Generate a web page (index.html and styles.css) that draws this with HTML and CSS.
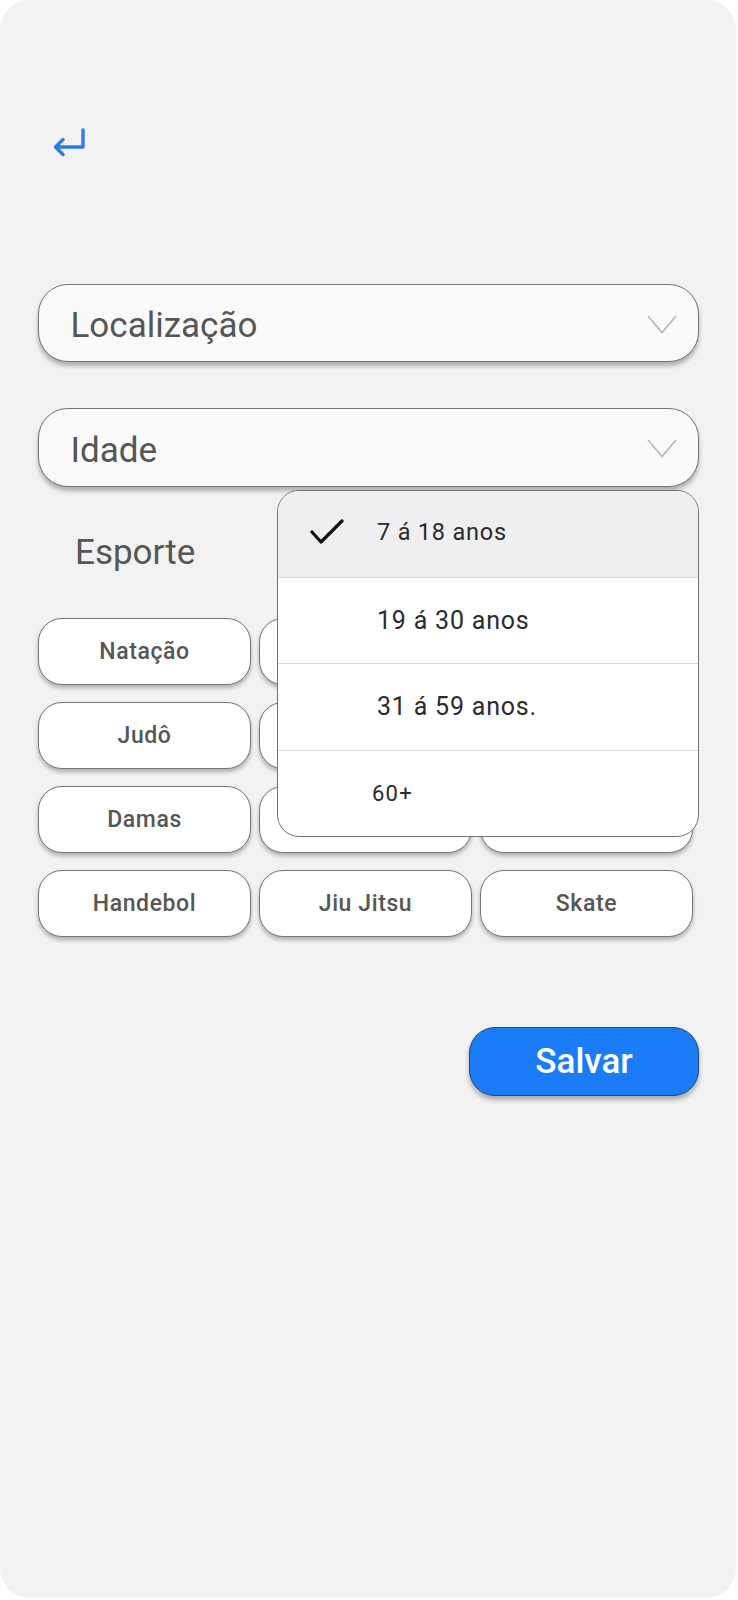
FILE: index.html
```html
<!DOCTYPE html>
<html lang="pt-BR">
<head>
<meta charset="utf-8">
<title>Filtros</title>
<link rel="stylesheet" href="styles.css">
</head>
<body>
<div class="screen">
  <a class="back" aria-label="Voltar">
    <svg width="36" height="30" viewBox="0 0 36 30" fill="none" stroke="#2a7de3" stroke-width="3.4" stroke-linecap="round" stroke-linejoin="round">
      <path d="M31 2 V19 H4"/>
      <path d="M11 11.5 L3.5 19 L11 26.5"/>
    </svg>
  </a>

  <div class="select select-first">
    <span class="select-label">Localização</span>
    <svg class="chevron" width="30" height="19" viewBox="0 0 30 19" fill="none" stroke="#b4b4b4" stroke-width="1.6">
      <polyline points="1,1 15,17.5 29,1"/>
    </svg>
  </div>

  <div class="select-wrap">
    <div class="select">
      <span class="select-label">Idade</span>
      <svg class="chevron" width="30" height="19" viewBox="0 0 30 19" fill="none" stroke="#b4b4b4" stroke-width="1.6">
        <polyline points="1,1 15,17.5 29,1"/>
      </svg>
    </div>
    <ul class="menu">
      <li class="menu-item selected">
        <svg class="check" width="34" height="27" viewBox="0 0 34 27" fill="none" stroke="#111" stroke-width="3.2" stroke-linecap="round" stroke-linejoin="round">
          <polyline points="2,14 11,24 32,3"/>
        </svg>
        <span class="t-sm">7 á 18 anos</span>
      </li>
      <li class="menu-item"><span class="t-lg">19 á 30 anos</span></li>
      <li class="menu-item"><span class="t-lg">31 á 59 anos.</span></li>
      <li class="menu-item last"><span class="t-xs">60+</span></li>
    </ul>
  </div>

  <div class="section-label">Esporte</div>

  <div class="sports">
    <button class="chip">Natação</button>
    <button class="chip">Futebol</button>
    <button class="chip">Vôlei</button>
    <button class="chip">Judô</button>
    <button class="chip">Basquete</button>
    <button class="chip">Tênis</button>
    <button class="chip">Damas</button>
    <button class="chip">Xadrez</button>
    <button class="chip">Atletismo</button>
    <button class="chip">Handebol</button>
    <button class="chip">Jiu Jitsu</button>
    <button class="chip">Skate</button>
  </div>

  <div class="actions">
    <button class="save">Salvar</button>
  </div>
</div>
</body>
</html>
```

FILE: styles.css
```css
* {
  box-sizing: border-box;
}

html, body {
  margin: 0;
  padding: 0;
  background: #ffffff;
}

body {
  font-family: Roboto, "Liberation Sans", Arial, sans-serif;
}

.screen {
  position: relative;
  width: 736px;
  height: 1598px;
  background: #f2f2f2;
  border-radius: 30px;
  padding: 128px 37px 0 38px;
  display: flex;
  flex-direction: column;
}

.back {
  display: block;
  width: 36px;
  height: 30px;
  margin-left: 14px;
}

.back svg {
  display: block;
}

.select {
  height: 78px;
  background: #fafafa;
  border: 1.5px solid #747474;
  border-radius: 30px;
  box-shadow: 0 4px 4px rgba(0, 0, 0, 0.28);
  display: flex;
  align-items: center;
  justify-content: space-between;
  padding: 0 21px 0 31.5px;
}

.select-first {
  margin-top: 126px;
}

.select-wrap {
  position: relative;
  margin-top: 46px;
  z-index: 2;
}

.select-wrap .select {
  height: 79px;
}

.select-label {
  font-size: 35px;
  color: #565656;
  line-height: 40px;
  margin-top: 6px;
}

.chevron {
  display: block;
  margin-top: 2px;
}

.menu {
  position: absolute;
  top: calc(100% + 3px);
  right: 0;
  width: 422px;
  height: 347px;
  margin: 0;
  padding: 0;
  list-style: none;
  background: #ffffff;
  border: 1.6px solid #717171;
  border-radius: 22px;
  overflow: hidden;
  display: flex;
  flex-direction: column;
}

.menu-item {
  position: relative;
  flex: 1;
  display: flex;
  align-items: center;
  padding-left: 99px;
  color: #2b2b2b;
  letter-spacing: 0.8px;
  border-bottom: 1px solid #d3d8dd;
}

.menu-item.last {
  border-bottom: none;
  padding-left: 94px;
}

.menu-item.selected {
  background: #efeff1;
}

.check {
  position: absolute;
  left: 32px;
  top: 50%;
  margin-top: -16px;
}

.t-sm {
  font-size: 23.5px;
  margin-top: -4px;
}

.t-lg {
  font-size: 25px;
}

.t-xs {
  font-size: 22px;
  letter-spacing: 1.2px;
}

.section-label {
  margin-top: 46px;
  padding-left: 37px;
  font-size: 35px;
  line-height: 40px;
  color: #565656;
}

.sports {
  margin-top: 45px;
  display: grid;
  grid-template-columns: repeat(3, 213px);
  grid-auto-rows: 67px;
  column-gap: 8px;
  row-gap: 17px;
}

.chip {
  margin: 0;
  padding: 0;
  background: #ffffff;
  border: 1.5px solid #777777;
  border-radius: 24px;
  box-shadow: 0 3px 4px rgba(0, 0, 0, 0.28);
  font-family: Roboto, "Liberation Sans", Arial, sans-serif;
  font-weight: 500;
  font-size: 23px;
  letter-spacing: 0.6px;
  color: #565656;
}

.actions {
  margin-top: 90px;
  display: flex;
  justify-content: flex-end;
}

.save {
  width: 230px;
  height: 69px;
  margin: 0;
  padding: 0;
  background: #1a7cf6;
  border: 1.5px solid #1c4a86;
  border-radius: 26px;
  box-shadow: 0 4px 5px rgba(0, 0, 0, 0.3);
  color: #ffffff;
  font-family: Roboto, "Liberation Sans", Arial, sans-serif;
  font-weight: 500;
  font-size: 35px;
}
```
